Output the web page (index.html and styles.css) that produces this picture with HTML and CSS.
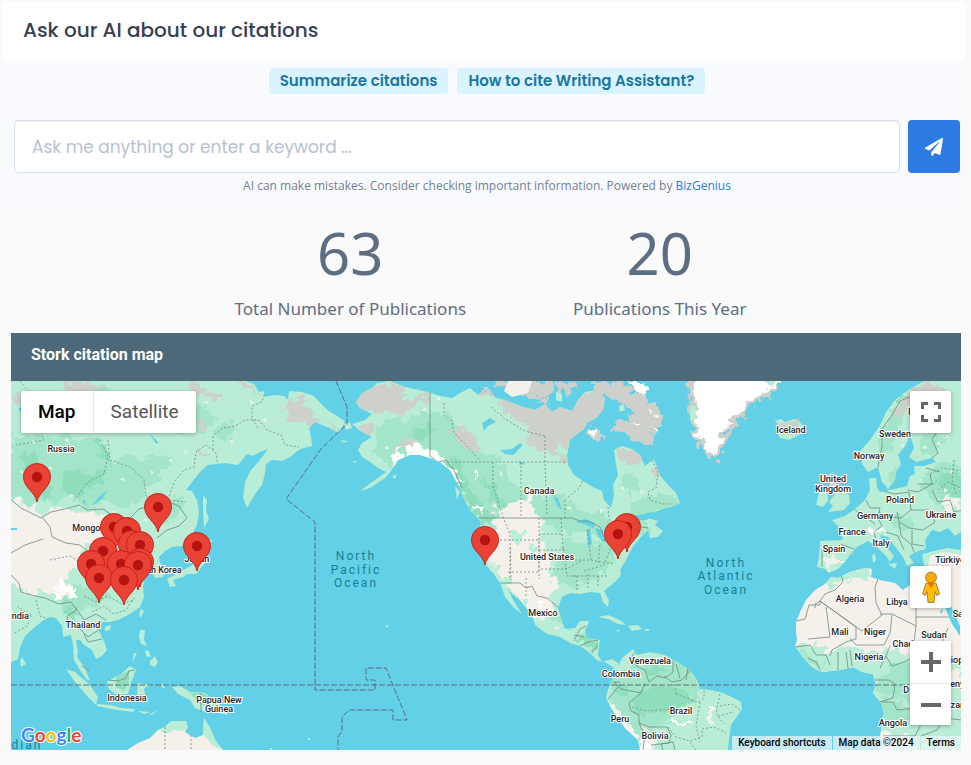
FILE: index.html
```html
<!DOCTYPE html>
<html lang="en">
<head>
  <meta charset="UTF-8">
  <title>Citations</title>
  <link rel="stylesheet" href="styles.css">
</head>
<body>
  <section class="ask">
    <h2>Ask our AI about our citations</h2>
    <div class="ask-body">
      <div class="suggestions">
        <button type="button">Summarize citations</button>
        <button type="button">How to cite Writing Assistant?</button>
      </div>
      <form class="ask-form">
        <input type="text" name="question" aria-label="Question" placeholder="Ask me anything or enter a keyword ...">
        <button type="submit" aria-label="Send">
          <svg viewBox="0 0 512 512" width="18" height="18"><path fill="#fff" d="M476 3.200L12.500 270.600c-18.100 10.400-15.800 35.600 2.200 43.200L121 358.400l287.300-253.200c5.500-4.900 13.300 2.600 8.600 8.300L176 407v80.500c0 23.600 28.500 32.900 42.500 15.800L282 426l124.600 52.200c14.200 6 30.400-2.900 33-18.200l72-432C515 7.800 493.300-6.800 476 3.200z"/></svg>
        </button>
      </form>
      <p class="disclaimer">AI can make mistakes. Consider checking important information. Powered by <a href="#">BizGenius</a></p>
    </div>
  </section>

  <section class="stats">
    <div class="stat">
      <strong>63</strong>
      <span>Total Number of Publications</span>
    </div>
    <div class="stat">
      <strong>20</strong>
      <span>Publications This Year</span>
    </div>
  </section>

  <section class="map-card">
    <h3>Stork citation map</h3>
    <div class="map">
      <svg class="world" viewBox="11 381 950 369" preserveAspectRatio="xMidYMid slice">
        <defs>
          <!-- ragged edges for the terrain patches -->
          <filter id="rough" x="-5%" y="-5%" width="110%" height="110%">
            <feTurbulence type="fractalNoise" baseFrequency="0.13" numOctaves="3" seed="4"/>
            <feDisplacementMap in="SourceGraphic" scale="16" xChannelSelector="R" yChannelSelector="G"/>
          </filter>
          <symbol id="pin" viewBox="-15 -40 30 42" overflow="visible">
            <path d="M0 0C-1.500-10-13.500-14-13.500-25.500a13.500 13 0 1 1 27 0C13.500-14 1.500-10 0 0z" fill="#ea4335" stroke="#c5221f"/>
            <circle cy="-25" r="5.200" fill="#b31412"/>
          </symbol>
          <clipPath id="asiaClip"><use href="#asia"/></clipPath>
          <clipPath id="americaClip"><use href="#america"/></clipPath>
          <clipPath id="southClip"><use href="#south"/></clipPath>
          <clipPath id="africaClip"><use href="#africa"/></clipPath>
          <clipPath id="europeClip"><use href="#europe"/></clipPath>
        </defs>

        <!-- Asia -->
        <path id="asia" class="land" d="M11 381H246L254 384 259 392 265 391 263 397 275 395 284 396 288 400 289 391 302 392 314 396 322 405 330 412 337 416 345 421 343 426 338 433 330 428 322 425 315 422 309 428 311 437 312 446 300 449 290 457 282 461 272 460 266 464 265 473 262 485 255 494 247 508 243 498 245 482 251 470 259 461 268 449 260 452 253 456 247 454 238 465 225 463 208 465 200 472 186 490 192 491 197 500 199 512 197 525 189 540 182 546 172 547 165 551 159 557 160 563 166 570 163 577 155 578 150 568 145 575 143 587 144 597 140 607 130 614 118 620 110 622 103 622 97 627 104 641 107 650 102 656 96 659 92 650 84 645 80 640 76 640 78 652 77 657 85 668 90 681 86 679 80 670 74 660 73 645 71 635 63 637 62 626 56 618 50 617 44 620 36 626 25 636 20 648 18 659 11 662Z"/>
        <g clip-path="url(#asiaClip)">
          <path class="forest" d="M11 434l15 4 9-8 13 10 18-6 12 8 18-6 12 12-5 8 14 6 12-8 8 6 22-6 18 5-14 10-6 14-12 4-4 14-14 8-16-8-24 8-16-14-15 8-12-6-14 10-8-10-13 8zM58 590l14-6 14 4 16-4 8 10-12 12-14 2-12 10-8-4zM86 384l20 5 8 12-16 8-12-8zM152 510l18-14 14 4-6 18-18 10zM212 430l18-10 10 10-16 12zM186 400l18 4 10 16-12 14-20-4-8-16z"/>
          <path class="forest deep" d="M64 478l10-8 14 6 20-8-6 14-14 8-10 8-15-8zM22 450l16 8 10 18-12 8-12-14zM96 438l14 12 2 14-12-8zM66 602l12 4-4 18-8-8zM30 482l16 4 8 12-12 4z"/>
          <path class="desert" d="M5 492l22 14 18 8 14-7 30 4 13 5 13-1 16 8-2 12-10 6-14 2-16-1-8 9 6 10-18 10-4 12 10 4-2 8-12 5-18-8-16 2-8-8-24-8z"/>
          <path class="snow" d="M56 584l8-4 4 6 6 3 3 8-8-3-8 0zM50 592l10 3 6 6-12-2z"/>
          <path class="rock" d="M15 392l9 8-4 6-8-5zM62 384l14-3 18 3 10 6-16 4-14 1zM84 398l12 5-8 5zM192 381l10 5 8 9 16 4-14 2-12-6-14-12zM188 412l14 8 8 14-14-9-12-7zM196 446l10 6 4 8-12-4zM284 410l8-12 12 2 6 14 8 6-2 9-15-8-12 0zM326 419l11 7 2 9-8-5zM240 381l12 4 6 9-16-6z"/>
          <path class="water" d="M107 490l-4 8-12 8 8-9zM18 409l9-4 2 4-8 3zM11 528h6v2H11zM150 434l8 8-2 2zM82 500l4 1-2 4z"/>
          <path class="speck" d="M20 470l3 2-2 2zM48 468l3-2 1 4zM70 494l4 1-3 3zM120 480l3-3 2 4zM150 470l4 2-2 3zM168 460l4-1 0 4zM185 450l3 2-4 2zM32 440l4 2-3 2zM250 400l4 2-3 3zM262 420l4-2 1 4zM230 440l4 1-3 3zM142 520l4-2 2 4zM64 440l4-2 1 4zM205 400l4 2-3 2z"/>
          <path class="border" d="M11 500l10 8 12 6 8 4 10-6 18-4 10-3 8 5 16-1 12 8 14 2 10-10 18-5 12-2 10 4 8 12-8 8-12 4-10 8M42 517l8 10 2 10 14 6 14 2 10 8 14 3 12-5 8-12M11 575l8 8 2 9 14 4 10 2 14 6 12-2 6 8-10 6 2 12M11 553l14-8 18-6M76 608l8 12 12-6 10 6M78 627l10 10 12-8M84 634l4 8 14-3"/>
          <path class="dash" d="M20 381l10 12 6 25 8 22-28 5M100 440l8 16-4 18-16 8-12 16M108 440l2 20 20 7 14 13 2 16 22 4 18 2M168 500l6-18 10-12 10-3 2-15 10-7 10 8 2 12M213 450l0-14 10-8 12-2 10-6 14 0 8 10 14 5 4 10 14 2M258 428l-6-10 0-12 10-4 4-14M36 600l4 16 12 4M84 596l12 6 12-6 14 8 12-4M92 612l12-6 10 8 12-4 8-12M17 606l14 10-4 10-14 8M50 560l20-4 16 10 2 16 12 8"/>
        </g>
        <path class="land" d="M203 495l4 5-1 10 3 9-5 9-1-18zM198 531l6 6 9 4-8 6-9-2zM207 552l-1 10-10 12-9 0-4 3-10 3 3 6-6 1-3-8 13-7 12-7 8-10zM141 609l3 2-3 7-2-4zM140 630h5l-1 10 3 6-6-2-2-7zM150 661l5-5 3 6-3 5-5-2zM145 650l4 1 2 6-5-1zM137 653l-5 10 2-10zM105 627l6-2-1 5-5 1zM22 657l4 7-5 3-1-6z"/>
        <path class="land" d="M66 669l9 3 15 13 8 12-2 8-10-10-11-13zM97 704l14 1 10 3 14 1-2 3-22-3-14-3zM107 681l13-6 10-9 6 4-4 10-4 14-13 0-7-6zM138 683l14 2-8 3 2 12-3-6-3 7-3-8zM172 687l8-1 10 6 15 1 15 12 8 10-13-3-10 0-10-4-5-8-12-6zM138 711l12 1-6 2zM150 714l8-4-6 5zM162 682l3 6-3 0z"/>
        <path class="deep" d="M116 678l13-8 0 12-5 9-8-4zM190 693l15 1 10 10-14 1z"/>
        <path class="border" d="M108 680l10 1 8-3 3-7 5-1M201 693v19M82 666l7 5"/>
        <path class="desert" d="M127 750l11-7 12-5 8-8 7-3 5-5 15-1 3 6-3 5 10 6 8-3 1-17 6 10 5 12 8 10z"/>
        <path class="land" d="M160 731l8-6 3-4 15 0 2 6-4 4-10-1-8 4zM204 718l6 10 5 12 8 10-10-4-10-12z"/>
        <path class="dash" d="M165 727v23M191 735v15"/>

        <!-- North America -->
        <path id="america" class="land" d="M356 402L362 393 372 388 377 383 390 381 405 387 428 392 440 396 452 398 462 392 470 388 478 395 485 392 496 398 505 400 520 406 535 410 545 404 552 412 560 407 572 411 578 400 585 392 597 390 605 398 603 410 596 418 588 422 583 430 577 434 570 440 567 455 568 465 574 475 583 481 593 487 602 491 604 500 611 508 614 495 613 485 618 475 616 465 614 450 622 446 632 449 640 455 645 466 654 459 660 475 668 485 676 493 680 503 674 506 665 508 655 512 648 518 658 521 655 525 663 531 658 537 650 538 648 530 640 538 632 548 626 560 620 570 621 575 615 582 604 591 609 600 608 607 603 602 600 593 590 592 580 594 570 593 562 597 558 608 562 622 565 629 575 628 580 621 589 621 585 632 587 638 600 640 598 655 602 662 612 659 618 663 620 672 605 662 598 661 590 653 580 646 570 643 560 637 547 634 535 625 532 615 520 600 510 592 507 587 513 600 522 614 514 608 505 597 500 583 493 573 486 565 480 550 479 535 481 522 470 510 463 497 460 488 450 470 440 462 430 458 420 455 410 455 398 460 392 470 385 478 370 488 360 491 375 480 386 472 378 468 370 462 362 457 358 450 362 443 372 437 362 432 352 424 365 420 372 414 360 408Z"/>
        <g clip-path="url(#americaClip)">
          <path class="forest" d="M376 426l18-8 12 6 16-14 24 4 16 16 10 16 12 8 14 4 14 24 28 16 24-2 20 18 18-2 14 14 26-8 8 8-20 18-24-2-14-12-24 4-20-10-16-4-22 4-12 26-10-24-12-24-14-16-16-2-14-14-22-2-14 6-20-20zM630 506l22-12 20 0 8 8-24 10-24 8zM564 536l14 6 20 2 20-6-2 22-20 20-24 8-18-8zM552 618l14-8 10 12-4 10zM560 560l12 6-6 16-12-6zM620 478l12-4 8 14-14 6z"/>
          <path class="forest deep" d="M442 458l16 4 12 24 14 20 12 14-14 4-12-16-12-20zM408 432l20-8 10 8-18 10zM480 478l14 8 16 26-14-4zM574 634l12-2 12 10 0 10-12-4z"/>
          <path class="desert" d="M500 514l8-10 16-4 4-8 6 8 4 18 6 4-2 18 8 20 6 26-6 10 4 16-14 8-12-6-12-26-8-8-12-6-8-14-4-24 12-8-8-8zM506 584l14 2 18 14 4 14-10 4-14-14z"/>
          <path class="forest light" d="M514 528l10 4-4 12-8-2zM492 562l8 4-4 8zM514 598l10 2 8 14-12-4zM530 540l6 4-3 12-6-6z"/>
          <path class="rock" d="M352 400l14-10 22-8 16 8-2 12-12 8-16 4-14-2zM390 404l22-6 18-4-2 8-14 4-14 10-10-4zM354 426l14-2 8 8-14 0zM446 432l16-4 12 8 6 16-12-4-10-12zM482 396l30 6 42 2 46-14 8 10-8 20-16 14-14 14-2 14-18-4-4-8-20-4-4-14-16-4-18-12zM615 447l18 2 8 8 0 8-14 0-8-8zM653 460l6 12 0 8-6-4zM392 450l10-10 18-2-2 6-18 4-6 10z"/>
          <path class="forest light" d="M476 392l20 4 10 18 18 10 6 14-22-6-20-16-14-8zM556 444l14 2 0 10-12-2z"/>
          <path class="snow" d="M394 454l6-6 1 12-7 6zM406 444l10-2 4 6 18 4 10 12 10 10 4 10-10-4-12-16-18-7-16 0zM474 505l10 3-3 7-6-4zM476 471l4 3-1 4-4-3zM536 602l10 4-6 5z"/>
          <path class="speck" d="M492 506l3-3 3 6zM500 470l3 4-3 2zM566 508l4-2 2 4zM600 508l4 2-4 4zM384 448l4-2 1 4zM620 488l3-2 2 5zM640 490l4 2-3 2zM420 410l6-2 0 3zM436 400l3-4 2 5zM504 516l4-6 4 3-3 6zM554 626l6 2-4 2z"/>
          <path class="water" d="M500 450l12-1 8-6 3 2-10 10-8-1zM482 423l8-5 6 4-8 4-4 5zM553 496l5 2 4 12-4-3zM575 522l10-3 10 4-1 5-10-4zM587 530l3-2 2 16-4 2zM595 528l8 2 0 10-4-2zM600 540l12-4-8 6zM490 386l8 2-4 4zM520 461l5 3-6 1zM634 516l18-4 8 2-14 6-7 0z"/>
          <path class="border" d="M430 392v64l8 6 8-2 8 10 8 18M478 518h94l8 3 8 0 12 6 5 13M500 583h20l6 5 6-2 5 10 10 2 12 10M604 540l10 6 14-2 8-18 12 2"/>
          <path class="dash" d="M431 462h136M444 403l0 12 8 6 2 12 12 12 14 16M493 462v24l4 12 8 24 5 12 1 46M521 462v55M545 436v26l2 54M491 407l14 12 20 12 20 5M539 518v16h22M561 518l2 30M500 540h39v32h-31M539 534v45M510 548v32M539 550h28M526 578v20M541 569h26l14-8M563 548l4 28 10 0M567 560l24 0 22 4M573 576h34M577 576v14M588 574v16M598 576v10M587 530l4 30M600 545l-2 20M612 545l-8 20-20 6M608 507l3 28 5 12M565 500l14-12 4-8M565 500v18M652 460l6 12-2 16-8 4 2 8 12 4 14 0"/>
          <path class="border" d="M574 641l6-12 6-3M580 646l8-4 10-2M592 653l6-8M574 635l10 2"/>
        </g>
        <!-- Arctic islands -->
        <path class="rock" d="M495 383l18-2 38 0 6 6-8 8-2 6-16-2-8-8-16 0zM556 381h22l-2 12-8 2-8-4zM484 389l8 4 0 6-8-4zM592 381h28l10 10 18 6 12 14 4 10-8 8-4 16-12-2-16-8-10-4 2-10 16 0-4-14-16-10-16-2-4-8zM592 428l8 2 6 8-8 2-4-4-6 4-2-4zM520 389l18-3 10 4-8 8-20-4z"/>
        <path class="desert" d="M508 381h24l-4 12-16 4-8-6z"/>
        <path class="land" d="M556 392l6 2 0 8-6-2zM619 406l5-2 1 6-5 2z"/>
        <path class="snow" d="M627 381h14l6 12-2 4-10-6zM648 408l6 4-2 4zM633 422l8 4-5 3zM594 427l2 10-6 0zM655 425l4 8-4-2z"/>
        <path class="land" d="M344 424l6-2 2 6-6 2zM392 477l5-3-2 5zM455 486l5 6-3 8zM340 440l8 1-4 2zM353 461l5 0-4 2z"/>
        <!-- Caribbean -->
        <path class="land" d="M598 617l10-2 12 5 6 5-8-1-10-5zM628 626l10-1 4 4-10 2zM616 630l4 0-2 2zM645 629h4v2h-4z"/>

        <!-- Greenland and Iceland -->
        <path class="rock" d="M686 386l5-8h90l-8 17-14 5-14 14-14 15-5 8-4 16-4 9-12-6-10-16-5-16-3-12 4-12z"/>
        <path class="snow" d="M694 375h90l-13 15-14 7-14 12-13 14-8 13-3 15-4 8-11-10-6-15-3-14 2-14z"/>
        <path class="land" d="M691 405l4 2 1 12-6 2zM764 381h12l-4 6z"/>
        <path class="land" d="M775 421l6-2 4 3 9-3 5 2 6 7-6 7-10 5-9-2-2-5 3-5z"/>
        <path class="rock" d="M776 420l5 4 14-4 6 6-8 8-12-4z"/>

        <!-- South America -->
        <path id="south" class="land" d="M617 668L622 658 633 649 637 655 650 652 665 655 677 662 690 670 697 680 700 689 710 690 720 692 730 696 741 702 742 709 738 715 731 725 729 740 728 750H640L638 740 625 728 612 710 606 698 608 690 612 680 618 675Z"/>
        <g clip-path="url(#southClip)">
          <path class="forest" d="M610 678l22-12 24-4 26-4 18 22-4 16-18 12-4 14-22 6-16 10-12-4-14-20z"/>
          <path class="forest deep" d="M640 690l20-4 26 4 8 12-20 8-26 0-10 6-6-16zM644 664l14-2 8 8-12 4zM616 682l14 4-6 12-8-4z"/>
          <path class="desert" d="M609 700l14 18 14 12 4 24h-6l-24-36zM644 728l10 10 2 16h-14zM709 708l6 2-3 16-3-4z"/>
          <path class="snow" d="M642 742l6-2 4 12h-10zM673 720l12 3 8-4-2 6-20 0zM709 709h5v3h-5z"/>
          <path class="border" d="M637 650l-8 10 8 6 8 4 4 12 8-6 8 2 8-6 0-12M664 676l8 6 10-2 10-12M645 683l-4 10-20-4-7-7M641 693l-12 10 2 8 8 4 0 8 10 4 18 0 4 8-2 8-18 2M608 699l12-14M639 723l6 12-2 15M676 664l4 14M688 668l-2 12M663 750l-2-6 12-2 2 8M612 682l8 0"/>
          <path class="dash" d="M632 707l14 4 24-2M676 694l-2-10M676 694l22 8 6-4 0-10M700 702l-4 24 4 16M668 727l8 10 14 4 12-4 0-8 12-2 12 6M720 694l-4 20 8 10M720 706l12-2 8 6M718 716l16-4M690 742l6 8"/>
        </g>

        <!-- Europe -->
        <path id="europe" class="land" d="M961 381H924L908 390 895 400 886 412 880 425 870 440 861 450 862 464 868 472 878 467 882 482 888 489 895 480 896 472 901 464 898 455 906 445 910 434 914 448 909 457 916 462 932 458 936 462 924 466 914 466 915 474 910 476 907 486 895 489 880 492 877 488 876 478 869 478 870 490 865 500 855 509 845 516 832 520 840 528 843 540 820 541 819 556 817 567 825 569 829 573 838 569 845 562 852 552 857 547 868 541 877 547 886 556 890 562 894 556 882 541 880 535 888 537 897 549 903 557 907 566 914 563 909 556 918 551 926 549 925 540 932 530 940 532 948 528 955 536 961 532Z"/>
        <g clip-path="url(#europeClip)">
          <path class="forest" d="M880 430l10-16 10-10 4 12-8 20-6 14-10 8zM918 436l18-6 10 10-8 12-16 6zM930 470l16-8 15 4v40l-20 2-16-14-4-14zM884 516l14-4 12 6 6 10-18 2zM890 470l8 2-4 14-6-6z"/>
          <path class="forest deep" d="M936 478l18-6 7 4v18l-18 2zM895 398l10-4 2 10-8 4z"/>
          <path class="rock" d="M900 400l14-14 12-5 16 6 4 8-16 0-18 8-12 12-6 8 0-10z"/>
          <path class="snow" d="M868 530l12-2 8 4-14 3-7 0z"/>
          <path class="desert" d="M826 557l10-2 8 4-8 8-10 2zM938 500l18-4 5 4v8l-16 0z"/>
          <path class="speck" d="M900 446l3-3 1 5zM922 448l4-3 1 4zM936 444l3-3 2 5zM946 434l3 2-2 3zM950 470l3 2-3 2zM944 488l4 2-4 3z"/>
          <path class="border" d="M878 467l4-20 0-18 10-14 8-14 14-6M928 397l8 20 2 14-6 8 6 14-10 8M866 500l4 8 10 0-2 10 4 8-8 6 2 8M879 490l16 4 14-2 2 18-10 8-16-2-6-4M911 510l18 0 6 12-12 8-14-2-10-6-2-10M855 510l12 8 8 6M908 490l10 2 14-8-2-10M899 522l2 14 10 8 4 10M886 532l12 4 6 14M912 530l0 14 12 2M840 544l14 5M822 549v18M926 468l14 4M918 484h16M932 490l6 12 12-2 4 12 8-2"/>
          <path class="dash" d="M930 474l12-6 19 3M938 490l10-8 13 6M954 460l-2 20 4 14"/>
        </g>
        <path class="land" d="M961 400v22l-14-4-10-12 12 2zM832 472l4 5-1 6 6 6 8 6 1 8-6 7-16 2 5-6-4-4 6-8-6-6zM819 493l8-1 1 9-5 6-7-2zM872 556l3-3 1 8-3 2zM888 564l9-1-2 6zM916 572l10 1-5 2z"/>
        <path class="rock" d="M829 472l8 0-4 6-4 2zM853 550l-3 3 3-1z"/>
        <!-- Turkey and the Middle East -->
        <path class="land" d="M922 554l12-3 14-3 13 2v38l-10-2-6-12-10 2-10-6z"/>
        <path class="desert" d="M930 556l14-4 17 3v110l-8-22-10-22-6-18 8-8-1-14-6-9-10-6z"/>

        <!-- Africa -->
        <path id="africa" class="desert" d="M825 584L831 577 838 578 850 572 865 568 872 569 871 577 880 580 895 583 903 590 910 585 930 587 942 588 946 600 951 615 957 628 961 636V750H878L882 725 884 713 881 703 873 693 876 685 873 674 862 672 853 667 840 670 822 672 812 667 803 657 795 646 797 640 796 632 796 622 801 610 806 600 815 590Z"/>
        <g clip-path="url(#africaClip)">
          <path class="forest light" d="M788 640l26 4 16 8 20-4 14 2 22 2 10-4 12 8 26-4 14 4 25 8v96H880l-14-70-40-10-38-22zM825 578l16-4 30-8-2 12-26 2-18 10z"/>
          <path class="forest" d="M876 680l16-14 18-4 20 6 16 10-4 20-20 8-24-8-18-2zM800 652l14 4 12 12-14-2zM880 700l22 0 8 16-14 10-12-8z"/>
          <path class="desert" d="M878 728l14 10 20-2 10 14h-46zM948 670l13 0v22l-10-10z"/>
          <path class="border" d="M841 574l2 8-8 8-10 4-6 8-4 2 0 4M809 605l11 0 0-4 36 26M809 605l-4 14-9 2M826 607l4 30-22 2M820 601l42 30 20-16-6-12-1-16 3-8M880 614l12 0 24 12 0-41M916 617h45M856 627l0 12-10 3-14 8-2 6M892 615l-2 18-6 12-28 0-6-7M890 646l-4 10-6 12M796 647l14-2 6 10 10 0 4 10M808 658l8 4 4 8M838 652l0 18M846 652l2 16M850 650l2 16M886 656l6 10 12-4 12-6 4-14M873 680h16l6 4-2 14-14 4M881 702h12l4 8 18-2 6 16-6 12-32 0M916 626l-2 16 8 8 18-2 8-20M915 652l10 16 16 2 6-14M925 668l-4 16 8 22 16-2 0-18 16 2M921 736l16-6 8-12 16 2M950 575l4 12-4 10"/>
        </g>
        <path class="water" d="M929 696l6-3 2 6-6 3zM940 612l3-4-1 6zM946 598l6 10 8 18v10l-8-12-6-14z"/>

        <path class="land" d="M386 625h2v2h-2zM308 738h2v2h-2zM270 748h2v2h-2z"/>

        <!-- Equator and date line -->
        <path class="line" d="M11 685H909"/>
        <path class="line" d="M336 381l11 26v17l-26 25-35 50 29 23v168h60v-10h-9v-12h20l21 52h-14v-10h-44l-7 7v14l-4 6v13"/>

        <g class="country">
          <text x="61" y="452">Russia</text>
          <text x="91" y="531">Mongolia</text>
          <text x="197" y="562">Japan</text>
          <text x="157" y="573">South Korea</text>
          <text x="19" y="619">India</text>
          <text x="83" y="628">Thailand</text>
          <text x="127" y="701">Indonesia</text>
          <text x="219" y="703">Papua New</text>
          <text x="219" y="712">Guinea</text>
          <text x="539" y="494">Canada</text>
          <text x="547" y="560">United States</text>
          <text x="543" y="616">Mexico</text>
          <text x="650" y="664">Venezuela</text>
          <text x="621" y="677">Colombia</text>
          <text x="681" y="714">Brazil</text>
          <text x="620" y="722">Peru</text>
          <text x="655" y="739">Bolivia</text>
          <text x="791" y="433">Iceland</text>
          <text x="895" y="437">Sweden</text>
          <text x="923" y="415">Finland</text>
          <text x="869" y="459">Norway</text>
          <text x="833" y="482">United</text>
          <text x="833" y="492">Kingdom</text>
          <text x="900" y="503">Poland</text>
          <text x="875" y="519">Germany</text>
          <text x="941" y="518">Ukraine</text>
          <text x="852" y="535">France</text>
          <text x="881" y="546">Italy</text>
          <text x="834" y="552">Spain</text>
          <text x="950" y="563">Türkiye</text>
          <text x="850" y="602">Algeria</text>
          <text x="897" y="605">Libya</text>
          <text x="840" y="635">Mali</text>
          <text x="875" y="635">Niger</text>
          <text x="903" y="647">Chad</text>
          <text x="934" y="638">Sudan</text>
          <text x="869" y="660">Nigeria</text>
          <text x="893" y="726">Angola</text>
          <text x="964" y="617">Saudi</text>
          <text x="954" y="663">Ethiopia</text>
          <text x="957" y="687">Kenya</text>
          <text x="912" y="693">DRC</text>
          <text x="954" y="708">Tanzania</text>
        </g>
        <g class="ocean">
          <text x="356" y="560">North</text>
          <text x="356" y="574">Pacific</text>
          <text x="356" y="587">Ocean</text>
          <text x="726" y="567">North</text>
          <text x="726" y="580">Atlantic</text>
          <text x="726" y="594">Ocean</text>
          <text x="20" y="749">Indian</text>
        </g>
        <text class="google" x="21" y="742"><tspan fill="#4285f4">G</tspan><tspan fill="#ea4335">o</tspan><tspan fill="#fbbc05">o</tspan><tspan fill="#4285f4">g</tspan><tspan fill="#34a853">l</tspan><tspan fill="#ea4335">e</tspan></text>

        <!-- Citation pins, north to south so the nearer ones overlap -->
        <g id="pins">
          <use href="#pin" x="22" y="462" width="30" height="42"/>
          <use href="#pin" x="143" y="492" width="30" height="42"/>
          <use href="#pin" x="99" y="512" width="30" height="42"/>
          <use href="#pin" x="112" y="516" width="30" height="42"/>
          <use href="#pin" x="117" y="529" width="30" height="42"/>
          <use href="#pin" x="125" y="530" width="30" height="42"/>
          <use href="#pin" x="182" y="531" width="30" height="42"/>
          <use href="#pin" x="88" y="536" width="30" height="42"/>
          <use href="#pin" x="125" y="547" width="30" height="42"/>
          <use href="#pin" x="76" y="549" width="30" height="42"/>
          <use href="#pin" x="106" y="549" width="30" height="42"/>
          <use href="#pin" x="123" y="550" width="30" height="42"/>
          <use href="#pin" x="84" y="563" width="30" height="42"/>
          <use href="#pin" x="109" y="565" width="30" height="42"/>
          <use href="#pin" x="612" y="512" width="30" height="42"/>
          <use href="#pin" x="603" y="519" width="30" height="42"/>
          <use href="#pin" x="470" y="525" width="30" height="42"/>
        </g>
      </svg>

      <div class="map-type">
        <button type="button" class="active">Map</button>
        <button type="button">Satellite</button>
      </div>
      <button type="button" class="control fullscreen" aria-label="Toggle fullscreen view">
        <svg viewBox="0 0 20 20" width="20" height="20"><path d="M1.500 7V1.500H7M13 1.500h5.500V7M18.500 13v5.500H13M7 18.500H1.500V13" fill="none" stroke="#666" stroke-width="3"/></svg>
      </button>
      <div class="side-controls">
        <button type="button" class="control" aria-label="Street View">
          <svg viewBox="0 0 20 34" width="20" height="34"><path d="M5 13h10l3.500 11-3 1.500-1.500-4-1 11H7l-1-11-1.500 4-3-1.500z" fill="#fbbc04" stroke="#8d6e3f" stroke-width=".8"/><circle cx="10" cy="7.500" r="5.500" fill="#f9ab00" stroke="#8d6e3f" stroke-width=".8"/><path d="M6.500 13h7L10 18z" fill="#e37400"/></svg>
        </button>
        <div class="zoom">
          <button type="button" class="control" aria-label="Zoom in">
            <svg viewBox="0 0 20 20" width="20" height="20"><path d="M0 10h20M10 0v20" stroke="#666" stroke-width="4"/></svg>
          </button>
          <button type="button" class="control" aria-label="Zoom out">
            <svg viewBox="0 0 20 20" width="20" height="20"><path d="M0 10h20" stroke="#666" stroke-width="4"/></svg>
          </button>
        </div>
      </div>
      <div class="map-footer">
        <button type="button">Keyboard shortcuts</button>
        <span>Map data ©2024</span>
        <a href="#">Terms</a>
      </div>
    </div>
  </section>
</body>
</html>
```
FILE: styles.css
```css
* { box-sizing: border-box; }
body { margin: 0; background: #fafafa; font-family: "Open Sans", "Noto Sans", sans-serif; }
button { border: none; cursor: pointer; padding: 0; }
h2, h3, p { margin: 0; }

.ask { margin: 2px 6px 0 2px; }
.ask h2 {
  padding: 13px 21px 15px;
  background: #fff;
  color: #344050;
  font: 500 20px/30px Poppins, Inter, sans-serif;
}
.ask-body { padding: 8px 5px 17px 12px; background: #f9fafd; }
.suggestions { display: flex; justify-content: center; gap: 9px; }
.suggestions button {
  padding: 0 11px;
  border-radius: 4px;
  background: #d9f3ff;
  color: #1978a2;
  font: 600 15px/26px Poppins, Inter, sans-serif;
}
.ask-form { display: flex; gap: 8px; margin-top: 26px; }
.ask-form input {
  flex: 1;
  min-width: 0;
  height: 53px;
  padding: 0 17px;
  border: 1px solid #d8e2ef;
  border-radius: 4px;
  background: #fff;
  box-shadow: inset 0 1px 2px rgba(0, 0, 0, 0.07);
  color: #344050;
  font: 400 17px Poppins, Inter, sans-serif;
}
.ask-form input::placeholder { color: #b6c1d2; opacity: 1; }
.ask-form button {
  display: flex;
  align-items: center;
  justify-content: center;
  width: 52px;
  border-radius: 4px;
  background: #2c7be5;
}
.disclaimer {
  margin-top: 4px;
  text-align: center;
  color: #748194;
  font-size: 12px;
  line-height: 18px;
}
.disclaimer a { color: #2c7be5; text-decoration: none; }

.stats {
  display: flex;
  justify-content: center;
  gap: 107px;
  padding: 8px 0 11px 10px;
  color: #5e6e82;
}
.stat { display: flex; flex-direction: column; align-items: center; }
.stat strong { font: 400 58px/66px "Noto Sans", sans-serif; }
.stat span { margin-top: 10px; font: 400 17px/26px "Noto Sans", sans-serif; }

.map-card { margin: 0 10px 15px 11px; }
.map-card h3 {
  padding: 0 20px 4px;
  background: #4d6979;
  color: #fff;
  font: 700 16px/44px Roboto, sans-serif;
}
.map {
  position: relative;
  overflow: hidden;
  background: #62d0e6;
  font-family: Roboto, sans-serif;
}
.world { display: block; width: 100%; aspect-ratio: 950 / 369; }
.land { fill: #b9edd6; }
.forest { fill: #a3e5c8; }
.deep { fill: #8edebb; }
.light { fill: #b9edd6; }
.desert { fill: #f5f0ea; }
.rock { fill: #cdd0cb; }
.snow { fill: #fff; }
.forest, .rock, .snow, g > .desert { filter: url(#rough); }
.speck { fill: #e9f3ec; }
.water { fill: #62d0e6; }
.border { fill: none; stroke: #6f8a84; stroke-width: 0.8; }
.dash { fill: none; stroke: #6f8a84; stroke-width: 0.8; stroke-dasharray: 2 2; }
.line { fill: none; stroke: #5d6d7c; stroke-dasharray: 6 2; }
.country text {
  fill: #1d1d1d;
  stroke: #fff;
  stroke-width: 2px;
  paint-order: stroke;
  font-size: 9px;
  font-weight: 500;
  text-anchor: middle;
}
.ocean text { fill: #168096; font-size: 12px; letter-spacing: 2px; text-anchor: middle; }
.google {
  font: 700 19px Lato, sans-serif;
  stroke: #fff;
  stroke-width: 2px;
  paint-order: stroke;
}

.map-type {
  position: absolute;
  top: 10px;
  left: 10px;
  display: flex;
  background: #fff;
  border-radius: 2px;
  box-shadow: 0 1px 4px rgba(0, 0, 0, 0.3);
}
.map-type button {
  padding: 0 17px;
  background: none;
  color: #565656;
  font: 400 19px/42px Roboto, sans-serif;
}
.map-type .active { color: #000; font-weight: 500; border-right: 1px solid #e6e6e6; }
.control {
  display: flex;
  align-items: center;
  justify-content: center;
  width: 41px;
  height: 42px;
  background: #fff;
  border-radius: 2px;
  box-shadow: 0 1px 4px rgba(0, 0, 0, 0.3);
}
.fullscreen { position: absolute; top: 10px; right: 10px; }
.side-controls {
  position: absolute;
  right: 10px;
  bottom: 25px;
  display: flex;
  flex-direction: column;
  gap: 33px;
}
.zoom { background: #fff; box-shadow: 0 1px 4px rgba(0, 0, 0, 0.3); }
.zoom .control { box-shadow: none; }
.zoom .control + .control { border-top: 1px solid #e6e6e6; }
.map-footer {
  position: absolute;
  right: 0;
  bottom: 0;
  display: flex;
  gap: 1px;
  font-size: 10px;
  font-weight: 500;
  line-height: 14px;
}
.map-footer button, .map-footer span, .map-footer a {
  padding: 0 6px;
  background: rgba(235, 246, 249, 0.75);
  color: #000;
  font: inherit;
  text-decoration: none;
}
```
